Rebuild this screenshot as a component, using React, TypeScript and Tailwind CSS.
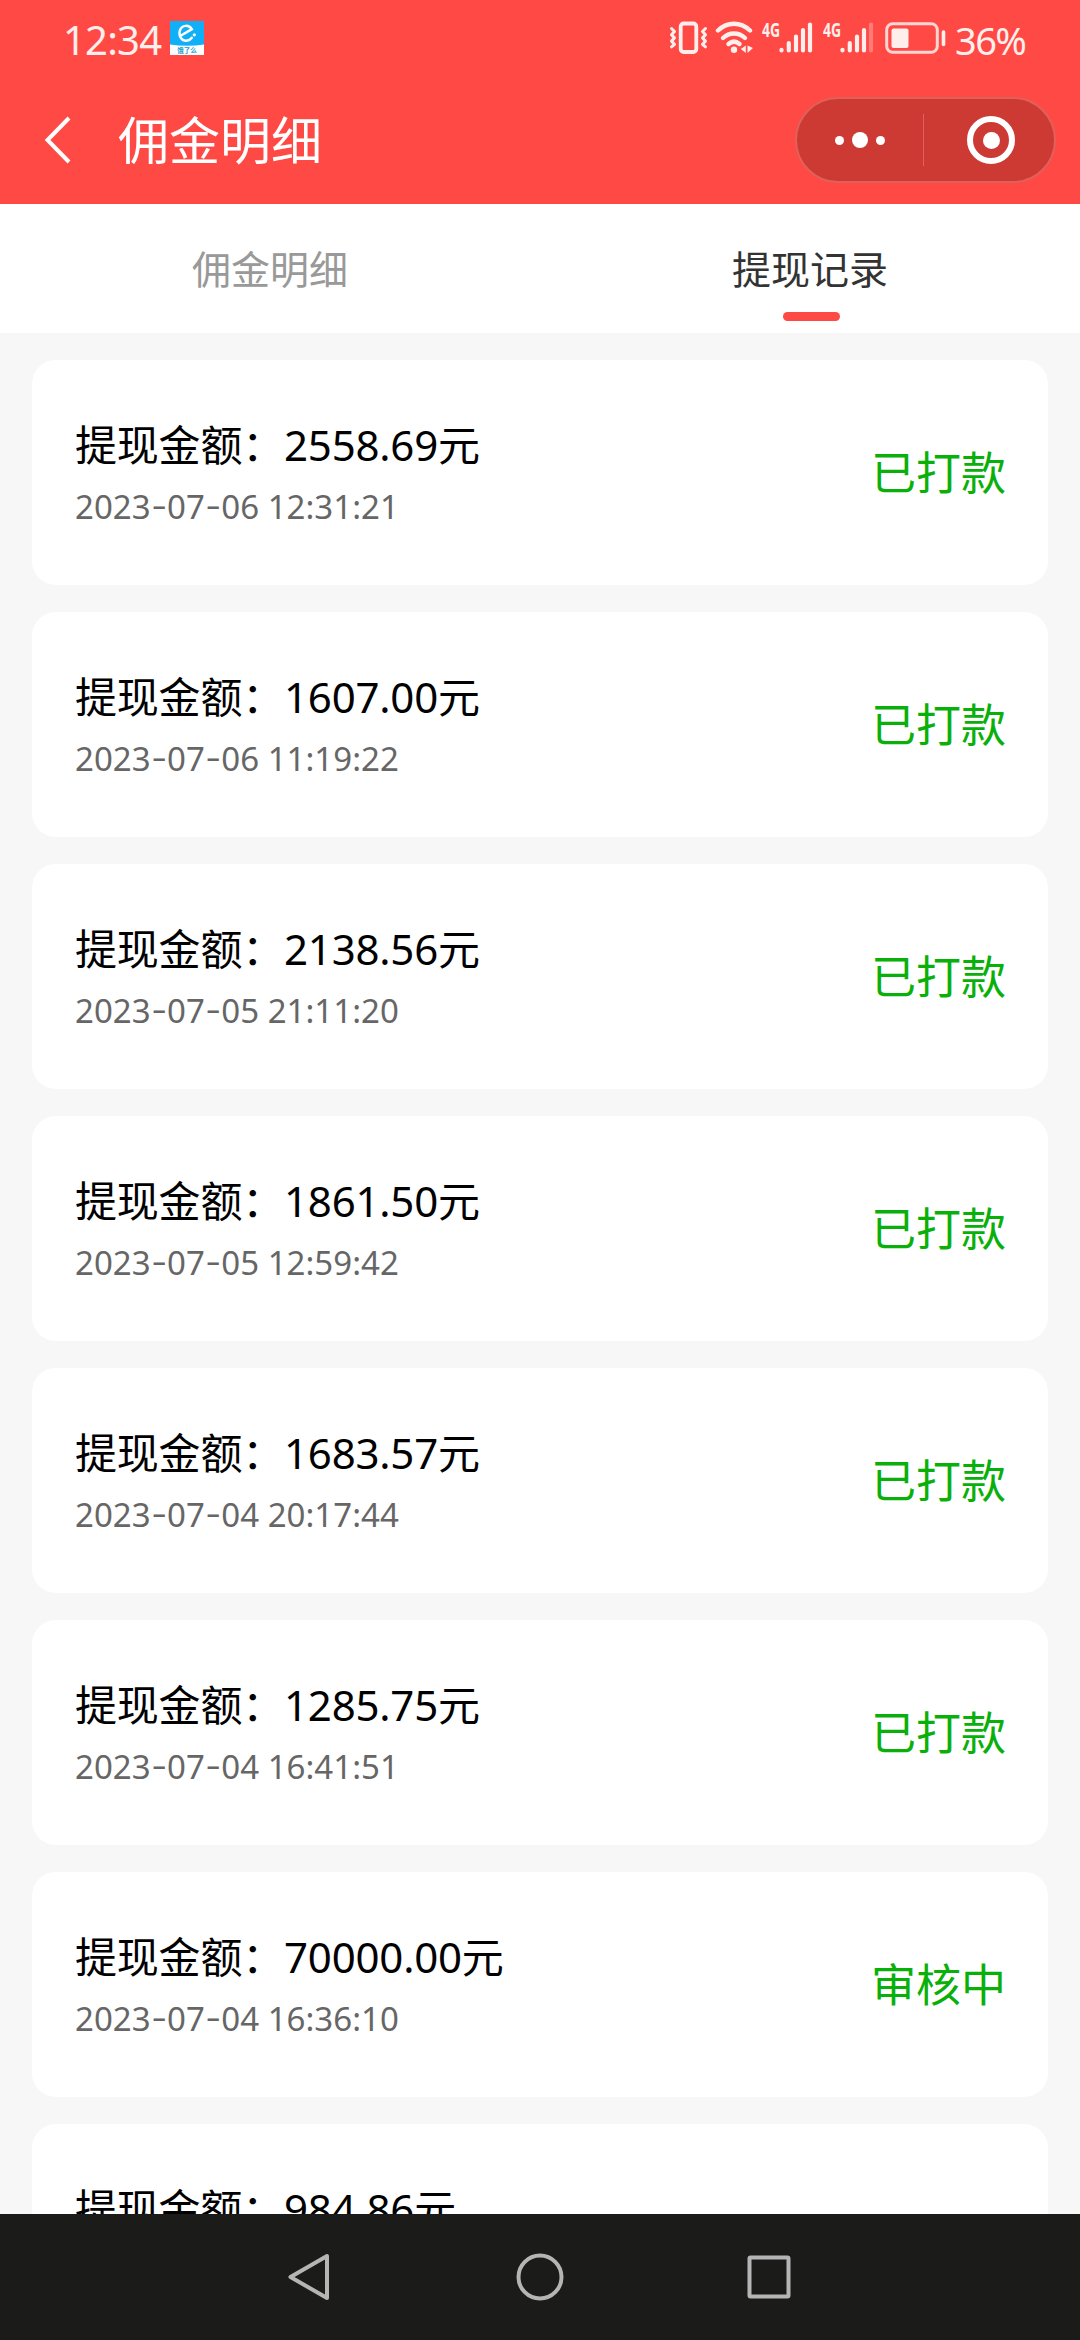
import React from 'react';

const records = [
  { amount: '2558.69', time: '2023-07-06 12:31:21', status: '已打款' },
  { amount: '1607.00', time: '2023-07-06 11:19:22', status: '已打款' },
  { amount: '2138.56', time: '2023-07-05 21:11:20', status: '已打款' },
  { amount: '1861.50', time: '2023-07-05 12:59:42', status: '已打款' },
  { amount: '1683.57', time: '2023-07-04 20:17:44', status: '已打款' },
  { amount: '1285.75', time: '2023-07-04 16:41:51', status: '已打款' },
  { amount: '70000.00', time: '2023-07-04 16:36:10', status: '审核中' },
  { amount: '984.86' },
];

const VibrateIcon = () => (
  <svg width="40" height="34" viewBox="0 0 40 34" fill="none" stroke="currentColor" strokeLinecap="round" strokeLinejoin="round">
    <rect x="11.7" y="2.5" width="15.6" height="28.5" rx="3" strokeWidth="3.8" />
    <path d="M2.500 7.500l3 3-3 3.200 3 3.200-3 3.200 3 3.200-3 2.500" strokeWidth="3" />
    <path d="M36.500 7.500l-3 3 3 3.200-3 3.200 3 3.200-3 3.200 3 2.500" strokeWidth="3" />
  </svg>
);

const WifiIcon = () => (
  <svg width="40" height="34" viewBox="0 0 40 34" fill="none" stroke="currentColor" strokeWidth="4.400" strokeLinecap="round">
    <path d="M3 9.500c9.500-9 22.500-9 32 0" />
    <path d="M8 17c6.200-6 15.800-6 22 0" />
    <path d="M13.500 23c3.500-3 7.500-3 11 0" />
    <circle cx="19" cy="28.800" r="3.200" fill="currentColor" stroke="none" />
    <path d="M30.800 24.500v7.500l-5-4zM32.500 24.500v7.500l5.500-5z" fill="currentColor" stroke="none" />
  </svg>
);

const SignalIcon = ({ weak = false }: { weak?: boolean }) => (
  <div className="flex h-[34px] items-start">
    <span className="w-[17px] origin-top-left scale-x-[0.7] text-[20px] leading-[17px] font-bold whitespace-nowrap">4G</span>
    <svg width="34" height="34" viewBox="0 0 34 34" stroke="currentColor" strokeWidth="4.200" strokeLinecap="round">
      <path d="M2.500 28.800v.7M9.800 22v7.500M17 15.500v14M24 9v20.500" />
      <path d="M31 3.500v26" opacity={weak ? 0.3 : 1} />
    </svg>
  </div>
);

const BatteryIcon = () => (
  <svg width="62" height="34" viewBox="0 0 62 34" fill="none">
    <rect x="1.700" y="2.700" width="50.600" height="28.600" rx="6" stroke="currentColor" strokeWidth="3" opacity="0.85" />
    <rect x="6.500" y="7.500" width="17" height="19.500" rx="2" fill="currentColor" />
    <path d="M58.500 11v12.500" stroke="currentColor" strokeWidth="3.600" strokeLinecap="round" />
  </svg>
);

const AppBadge = () => (
  <svg width="34" height="34" viewBox="0 0 34 34">
    <path d="M0 0h34v34H0z" fill="#fff" />
    <path d="M0 0h34v23.500c-11 1.600-23 1.600-34 0z" fill="#0fb0f8" />
    <path d="M11 14.500l10.800-6.300C19 3.500 12 3.700 10 9.200 8 15 12 20.500 17.500 19.500c2-.4 3.300-1.300 4.300-2.700" fill="none" stroke="#fff" strokeWidth="2.500" strokeLinecap="round" />
    <circle cx="24.300" cy="13.800" r="1.600" fill="#fff" />
    <text x="17" y="32" textAnchor="middle" fontSize="6.500" fontWeight="700" fill="#1a9ccc">饿了么</text>
  </svg>
);

const StatusBar = () => (
  <div className="flex h-20 justify-between pt-[21px] pr-[56px] pl-[63px] text-[#ffefec]">
    <div className="flex items-start">
      <span className="w-[107px] text-[40px] leading-[38px] tracking-[-0.8px]">12:34</span>
      <AppBadge />
    </div>
    <div className="flex items-start">
      <div className="w-[46px]"><VibrateIcon /></div>
      <div className="w-[47px]"><WifiIcon /></div>
      <div className="w-[61px]"><SignalIcon /></div>
      <div className="w-[62px]"><SignalIcon weak /></div>
      <div className="w-[70px]"><BatteryIcon /></div>
      <span className="w-[69px] text-[38px] leading-[38px] tracking-[-1.6px] whitespace-nowrap">36%</span>
    </div>
  </div>
);

const TitleBar = () => (
  <div className="flex h-[124px] items-center pr-6 pl-[42px] pb-1">
    <svg width="30" height="50" viewBox="0 0 30 50" fill="none" stroke="#fff" strokeWidth="4">
      <path d="M27 3L5.500 25 27 47" />
    </svg>
    <h1 className="ml-[46px] text-[51px] leading-[60px] text-white">佣金明细</h1>
    <div className="ml-auto flex h-[86px] w-[261px] items-center rounded-full border-2 border-[#e2605b] bg-[#cd3a34]">
      <div className="flex flex-1 items-center justify-center gap-2">
        <span className="size-[9px] rounded-full bg-white" />
        <span className="size-4 rounded-full bg-white" />
        <span className="size-[9px] rounded-full bg-white" />
      </div>
      <span className="h-[52px] w-px bg-[#e2605b]" />
      <div className="flex flex-1 items-center justify-center pl-1">
        <span className="flex size-12 items-center justify-center rounded-full border-6 border-white">
          <span className="size-[17px] rounded-full bg-white" />
        </span>
      </div>
    </div>
  </div>
);

const Tabs = () => (
  <div className="flex h-[129px] bg-white text-[39px] leading-[60px]">
    <div className="flex flex-1 flex-col items-center pt-[35px] text-[#999]">佣金明细</div>
    <div className="flex flex-1 flex-col items-center pt-[35px] text-[#333]">
      提现记录
      <span className="mt-[13px] ml-[3px] h-[9px] w-[57px] rounded-full bg-[#fd4a44]" />
    </div>
  </div>
);

const RecordTime = ({ value }: { value: string }) => (
  <p className="mt-[11px] text-[33px] leading-[45px] text-[#666]">
    {value.split('').map((char, i) =>
      char === '-' ? (
        <span key={i} className="inline-block w-[16.5px] -translate-y-0.5 scale-x-140 text-center">-</span>
      ) : (
        char
      )
    )}
  </p>
);

const NavBar = () => (
  <div className="flex h-[126px] shrink-0 items-center justify-center bg-[#1b1c1a] text-[#b5b5b5]">
    <svg width="504" height="50" viewBox="0 0 504 50" fill="none" stroke="currentColor" strokeWidth="4" strokeLinejoin="round">
      <path d="M2.500 25L39 4v42z" />
      <circle cx="252" cy="25" r="21.500" />
      <rect x="461.500" y="5.500" width="39" height="39" rx="1" />
    </svg>
  </div>
);

export default function App() {
  return (
    <div className="flex h-[2340px] w-[1080px] flex-col overflow-hidden bg-[#f7f7f7] font-['Noto_Sans','Noto_Sans_CJK_SC',sans-serif]">
      <header className="shrink-0 bg-[#ff4945]">
        <StatusBar />
        <TitleBar />
        <Tabs />
      </header>

      <main className="flex min-h-0 flex-1 flex-col gap-[27px] overflow-hidden px-8 pt-[27px]">
        {records.map((record) => (
          <div key={record.amount} className="flex h-[225px] shrink-0 items-start justify-between rounded-3xl bg-white pt-[57px] pr-[42px] pl-[43px]">
            <div>
              <p className="text-[42px] leading-[56px] tracking-[-0.2px] text-black">提现金额：{record.amount}元</p>
              {record.time && <RecordTime value={record.time} />}
            </div>
            {record.status && (
              <span className="mt-[26px] text-[45px] leading-[60px] text-[#09b00a]">{record.status}</span>
            )}
          </div>
        ))}
      </main>

      <NavBar />
    </div>
  );
}
